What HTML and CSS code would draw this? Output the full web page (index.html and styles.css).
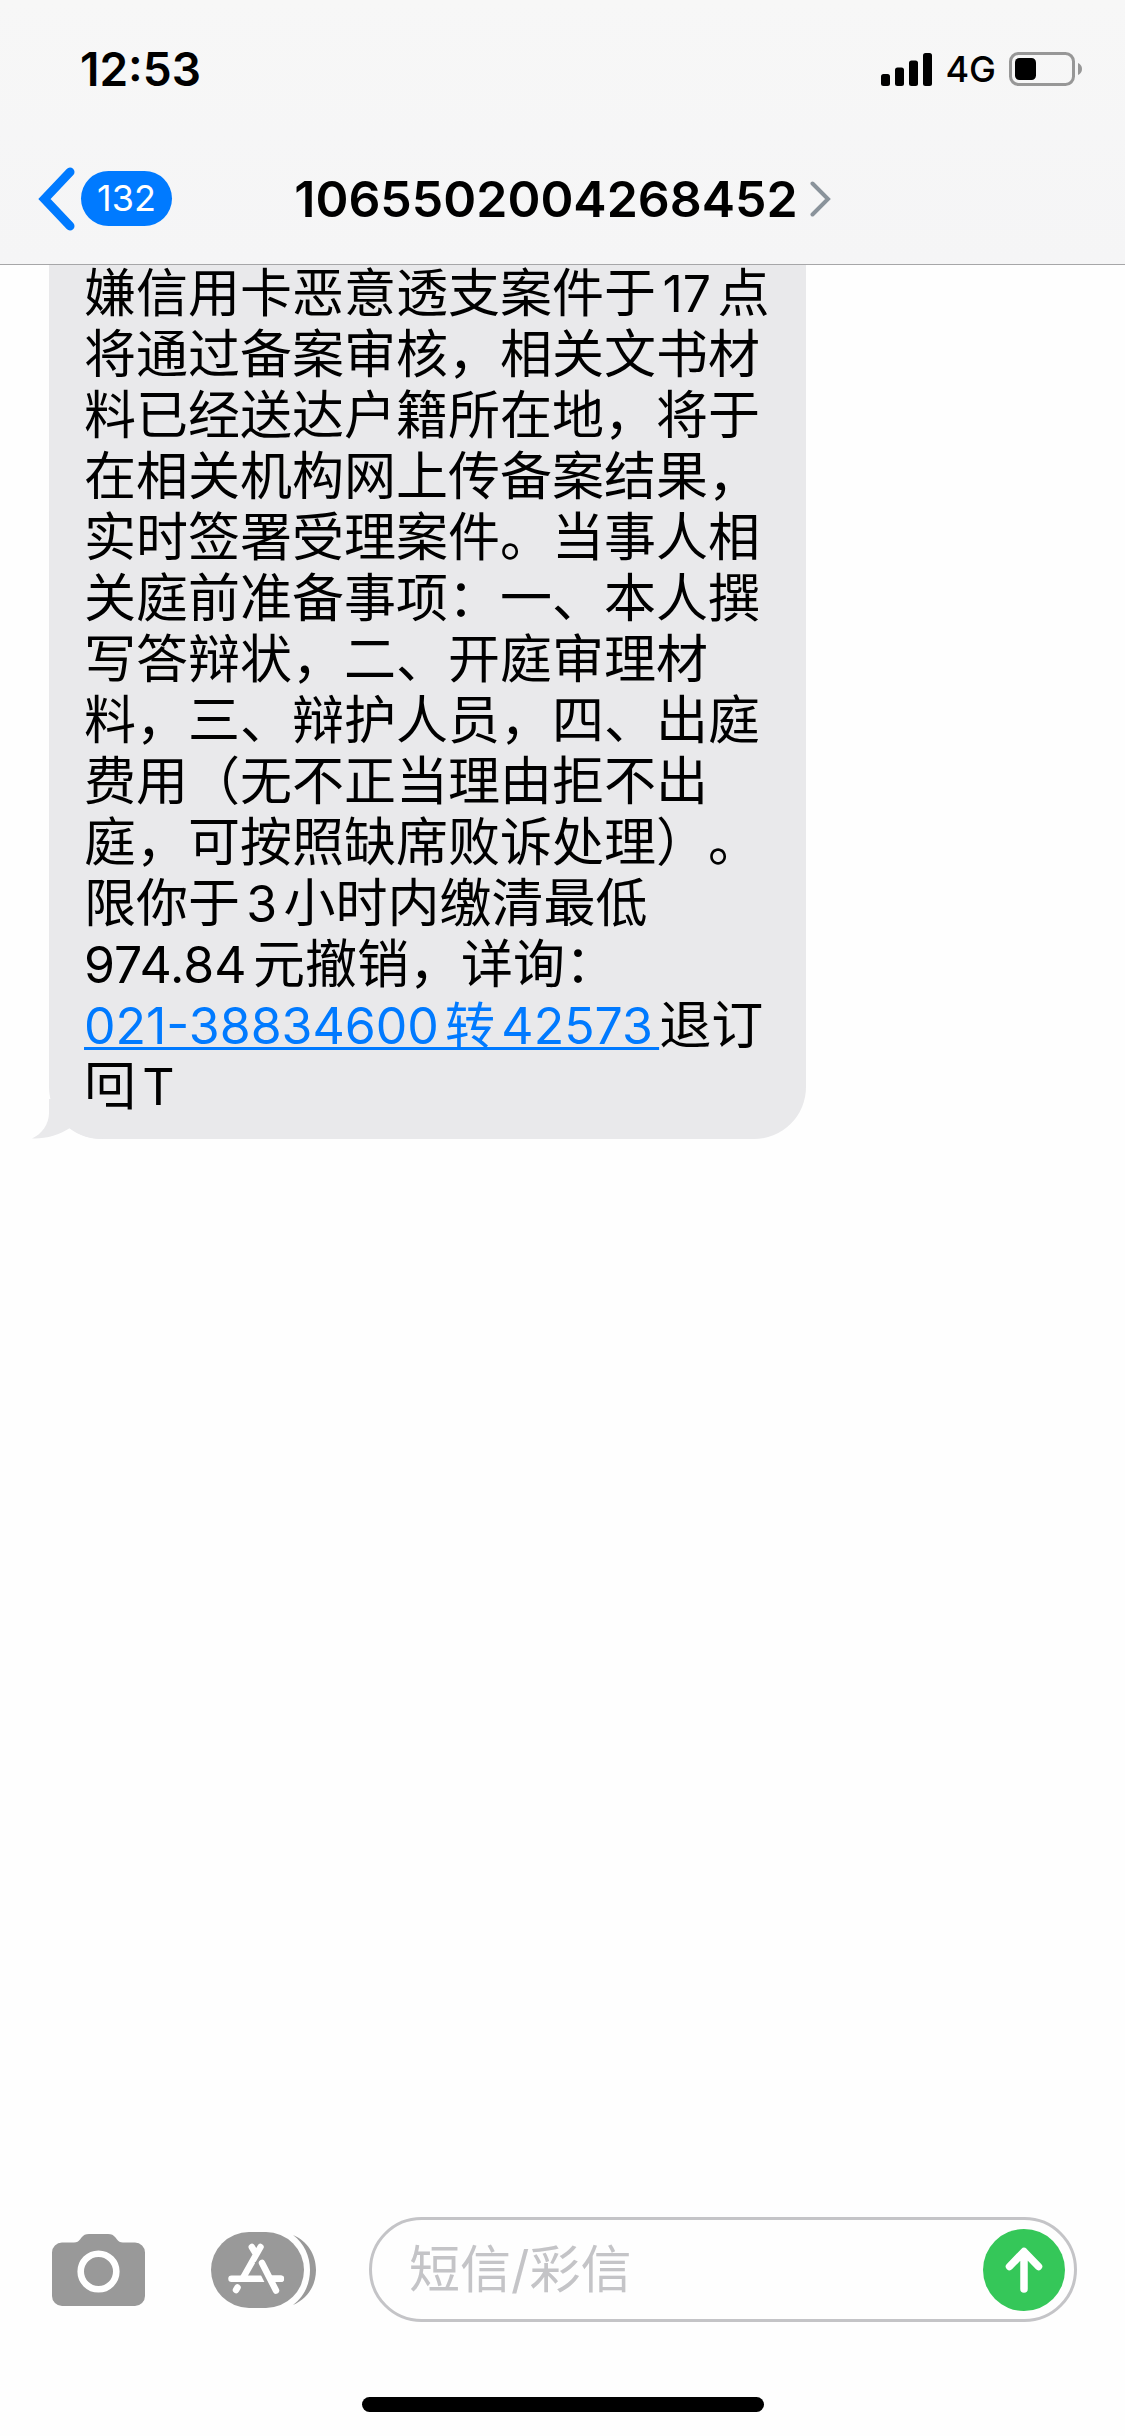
FILE: index.html
```html
<!DOCTYPE html>
<html lang="zh-CN">
<head>
<meta charset="utf-8">
<meta name="viewport" content="width=device-width, initial-scale=1">
<title>1065502004268452</title>
<link rel="stylesheet" href="styles.css">
</head>
<body>
<header class="header">
  <div class="status">
    <time class="status-time">12:53</time>
    <div class="status-icons">
      <svg class="icon" width="51" height="33" viewBox="0 0 51 33" aria-hidden="true">
        <rect x="0" y="21" width="9" height="12" rx="2.500"/>
        <rect x="14" y="14.500" width="9" height="18.500" rx="2.500"/>
        <rect x="28" y="7.500" width="9" height="25.500" rx="2.500"/>
        <rect x="42" y="0" width="9" height="33" rx="2.500"/>
      </svg>
      <span class="network">4G</span>
      <svg class="icon" width="73" height="34" viewBox="0 0 73 34" aria-hidden="true">
        <rect x="1.500" y="1.500" width="63" height="31" rx="8" fill="none" stroke="#979797" stroke-width="3"/>
        <rect x="6" y="6" width="21" height="22" rx="4.500"/>
        <path d="M69 11c2.600 1 4 3.400 4 6s-1.400 5-4 6z" fill="#979797"/>
      </svg>
    </div>
  </div>
  <nav class="nav">
    <button class="back" type="button" aria-label="返回">
      <svg class="icon" width="38" height="64" viewBox="0 0 38 64" aria-hidden="true">
        <path d="M33 5 7.500 32 33 59" fill="none" stroke="#007aff" stroke-width="9" stroke-linecap="round" stroke-linejoin="miter"/>
      </svg>
      <span class="badge">132</span>
    </button>
    <button class="contact" type="button">
      <span>1065502004268452</span>
      <svg class="icon" width="21" height="36" viewBox="0 0 21 36" aria-hidden="true">
        <path d="M2.500 2.500 18 18 2.500 33.500" fill="none" stroke="#8a939b" stroke-width="4" stroke-linecap="round"/>
      </svg>
    </button>
  </nav>
</header>
<main class="messages">
  <div class="bubble">
    <p class="text">嫌信用卡恶意透支案件于<span class="num">17</span>点<br>将通过备案审核，相关文书材<br>料已经送达户籍所在地，将于<br>在相关机构网上传备案结果，<br>实时签署受理案件。当事人相<br>关庭前准备事项：一、本人撰<br>写答辩状，二、开庭审理材<br>料，三、辩护人员，四、出庭<br>费用（无不正当理由拒不出<br>庭，可按照缺席败诉处理）。<br>限你于<span class="num">3</span>小时内缴清最低<br><span class="num">974.84</span>元撤销，详询：<br><a class="phone num" href="tel:02138834600,42573">021-38834600转42573</a>退订<br>回<span class="num">T</span></p>
    <svg class="tail" width="74" height="40" viewBox="0 0 74 40" aria-hidden="true">
      <path d="M17 0H74V40C56 40 46 35.500 38 29C27 36 14 40 0 39.500C10 35 17 25 17 14Z" fill="#e9e9eb"/>
    </svg>
  </div>
</main>
<footer class="composer">
  <div class="tools">
    <button class="tool" type="button" aria-label="相机">
      <svg class="icon" width="93" height="72" viewBox="0 0 93 72" aria-hidden="true">
        <path d="M10 8.500H22C25 8.500 26.500 7.500 28 5.500L29.500 3.500C31.500 1 33.500 0 37 0H56C59.500 0 61.500 1 63.500 3.500L65 5.500C66.500 7.500 68 8.500 71 8.500H83A10 10 0 0 1 93 18.500V62A10 10 0 0 1 83 72H10A10 10 0 0 1 0 62V18.500A10 10 0 0 1 10 8.500Z" fill="#999"/>
        <circle cx="46.500" cy="37.500" r="17.800" fill="none" stroke="#fff" stroke-width="6.600"/>
      </svg>
    </button>
    <button class="tool" type="button" aria-label="App">
      <svg class="icon" width="105" height="76" viewBox="0 0 105 76" aria-hidden="true">
        <path d="M82 3C96 9 105 22 105 38S96 67 82 73C93 65 99 52 99 38S93 11 82 3Z" fill="#999"/>
        <rect width="93" height="76" rx="38" fill="#999"/>
        <g fill="none" stroke="#fff" stroke-width="6.500" stroke-linecap="round">
          <path d="M49.500 15 32.500 45M40.800 15 45 22"/>
          <path d="M20.500 46.700H69.800"/>
          <path d="M26.500 55.500 25 58"/>
          <path d="M46.500 29 62 60" stroke="#999" stroke-linecap="butt"/>
          <path d="M51 31 65 58.500"/>
          <path d="M60 46.700H69.800"/>
        </g>
      </svg>
    </button>
  </div>
  <form class="field">
    <input class="input" type="text" placeholder="短信/彩信" aria-label="短信/彩信">
    <button class="send" type="button" aria-label="发送">
      <svg class="icon" width="82" height="82" viewBox="0 0 82 82" aria-hidden="true">
        <circle cx="41" cy="41" r="41" fill="#35c759"/>
        <path d="M41 60V24M26.500 37.500 41 22.500 55.500 37.500" fill="none" stroke="#fff" stroke-width="7.500" stroke-linecap="round" stroke-linejoin="round"/>
      </svg>
    </button>
  </form>
</footer>
<div class="home"></div>
</body>
</html>
```
FILE: styles.css
```css
* { box-sizing: border-box; }

body {
  margin: 0;
  min-height: 100vh;
  display: flex;
  flex-direction: column;
  background: #fefefe;
  color: #000;
  font-family: Inter, "Noto Sans CJK SC", sans-serif;
}

button {
  margin: 0;
  padding: 0;
  border: 0;
  background: none;
  color: inherit;
  font: inherit;
}

.icon { display: block; flex: none; }

/* Header */
.header {
  position: sticky;
  top: 0;
  z-index: 1;
  background: linear-gradient(#f7f7f7, #f5f5f6);
  box-shadow: 0 1px 0 #a6a6a8;
}

.status {
  display: flex;
  justify-content: space-between;
  align-items: center;
  height: 133px;
  padding: 5px 43px 0 80px;
}

.status-time {
  font-size: 46px;
  font-weight: 600;
}

.status-icons {
  display: flex;
  align-items: center;
  gap: 13px;
}

.network {
  font-size: 36px;
  font-weight: 500;
}

.nav {
  display: grid;
  grid-template-columns: 1fr auto 1fr;
  align-items: center;
  height: 131px;
  padding: 0 37px;
}

.back {
  justify-self: start;
  display: flex;
  align-items: center;
  gap: 6px;
}

.badge {
  padding: 0 16px;
  border-radius: 28px;
  background: #007aff;
  color: #fff;
  font-size: 36px;
  line-height: 55px;
}

.contact {
  display: flex;
  align-items: center;
  gap: 12px;
  font-size: 50px;
  font-weight: 600;
}

/* Conversation, scrolled slightly under the header */
.messages {
  flex: 1;
  margin-top: -1px;
  padding: 0 49px;
}

.bubble {
  position: relative;
  width: fit-content;
  padding: 0 37px 22px 35px;
  border-radius: 0 0 52px 52px;
  background: #e9e9eb;
}

.text {
  margin: 0;
  font-size: 52px;
  line-height: 61px;
  text-autospace: normal;
  text-spacing-trim: space-all;
}

.num {
  font-size: 50px;
  line-height: 1;
}

.phone {
  color: #007aff;
  text-decoration: underline;
  text-decoration-thickness: 3px;
  text-decoration-skip-ink: none;
  text-underline-offset: 3px;
}

.tail {
  position: absolute;
  left: -17px;
  bottom: 0;
}

/* Composer */
.composer {
  display: flex;
  align-items: center;
  gap: 53px;
  padding: 0 48px 0 52px;
}

.tools {
  display: flex;
  align-items: center;
  gap: 66px;
}

.field {
  flex: 1;
  min-width: 0;
  display: flex;
  align-items: center;
  height: 105px;
  padding: 0 9px 0 37px;
  border: 3px solid #c4c4c7;
  border-radius: 53px;
}

.input {
  flex: 1;
  min-width: 0;
  padding: 0;
  border: 0;
  outline: 0;
  background: none;
  font: inherit;
  font-size: 51px;
}

.input::placeholder { color: #c4c4c7; opacity: 1; }

.home {
  width: 402px;
  height: 15px;
  margin: 75px auto 24px;
  border-radius: 8px;
  background: #000;
}
```
